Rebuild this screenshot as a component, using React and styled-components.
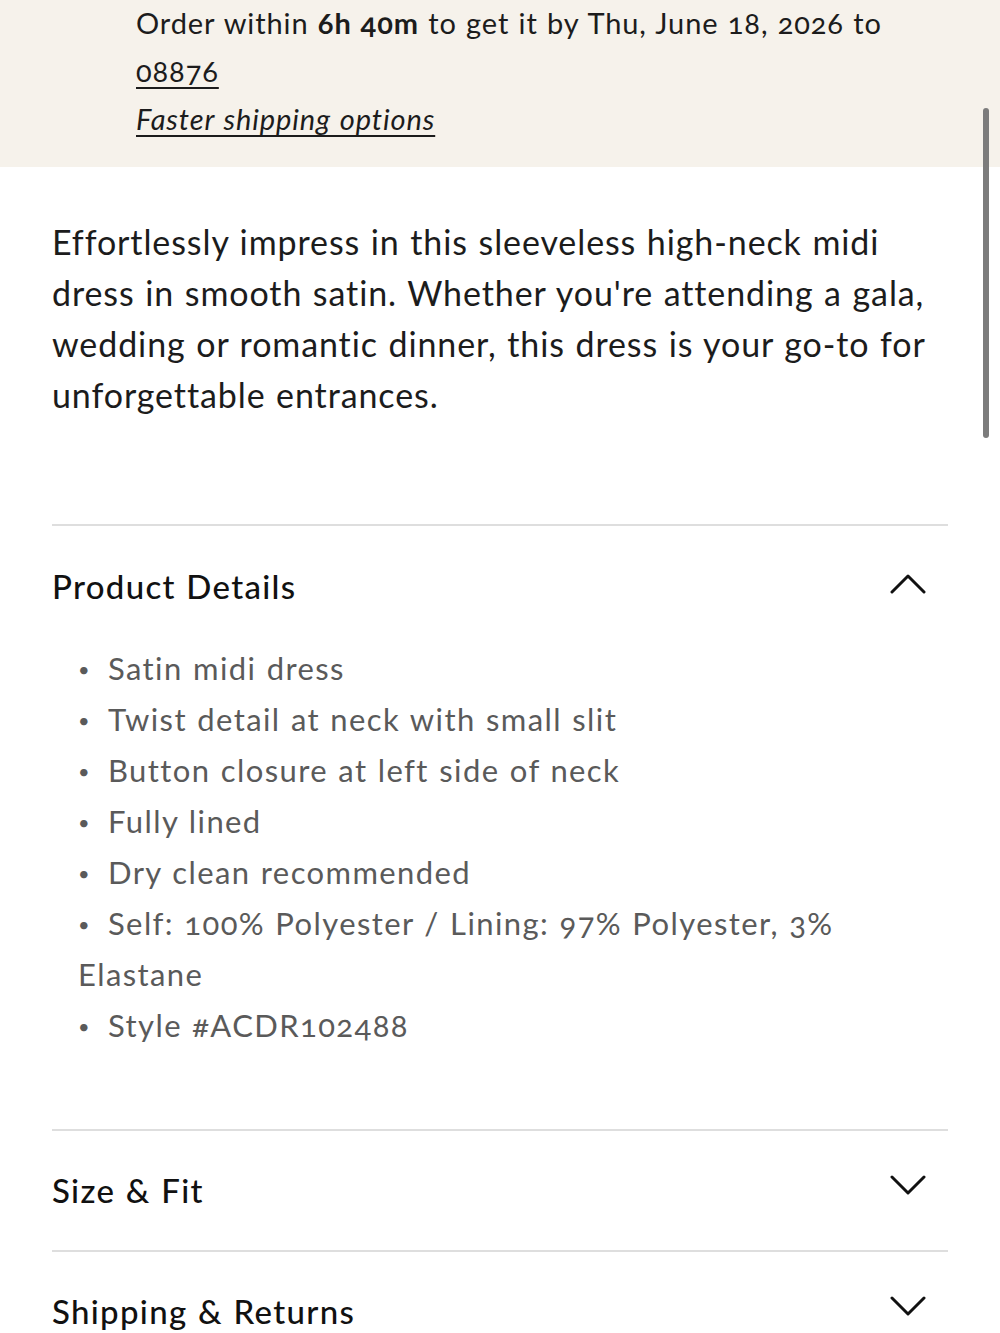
import React from "react";
import styled, { createGlobalStyle } from "styled-components";

const GlobalStyle = createGlobalStyle`
  html, body {
    margin: 0;
    padding: 0;
    background: #ffffff;
  }
  body {
    font-family: Lato, "Noto Sans", sans-serif;
    font-variant-numeric: oldstyle-nums;
    color: #1c1c1c;
    overflow: hidden;
  }
`;

const Page = styled.div`
  position: relative;
  width: 1000px;
  height: 1333px;
  overflow: hidden;
`;

const ScrollThumb = styled.div`
  position: absolute;
  top: 108px;
  right: 11px;
  width: 6px;
  height: 330px;
  border-radius: 3px;
  background: #7c7c7c;
`;

const DeliveryBanner = styled.div`
  background: #f6f2eb;
  padding: 0 80px 24px 136px;
  margin-top: -1px;
  font-size: 29px;
  line-height: 48px;
  letter-spacing: 0.9px;
  word-spacing: 1px;
  color: #1c1c1c;
`;

const Line = styled.div``;

const Strong = styled.b`
  font-weight: 700;
`;

const Link = styled.a`
  color: inherit;
  text-decoration: underline;
  text-underline-offset: 5px;
  text-decoration-thickness: 2px;
  font-style: ${(p) => (p.$italic ? "italic" : "normal")};
`;

const Content = styled.div`
  padding: 0 52px;
`;

const Description = styled.p`
  margin: 49px -8px 104px 0;
  font-size: 34px;
  line-height: 51px;
  letter-spacing: 0.9px;
  word-spacing: 1px;
  color: #1c1c1c;
`;

const Section = styled.div`
  border-top: 2px solid #dedede;
`;

const SectionHead = styled.div`
  display: flex;
  align-items: center;
  justify-content: space-between;
  padding: ${(p) => (p.$open ? "35px 22px 32px 0" : "34px 22px 35px 0")};
`;

const SectionTitle = styled.h3`
  margin: 0;
  font-size: 33px;
  line-height: 50px;
  font-weight: 500;
  letter-spacing: 1.3px;
  word-spacing: 1px;
  color: #111;
`;

const Chevron = styled.svg`
  width: 36px;
  height: 20px;
  margin-top: ${(p) => p.$shift || 0}px;
`;

const DetailList = styled.ul`
  list-style: none;
  margin: 0 0 78px;
  padding: 0 0 0 26px;
  font-size: 31px;
  line-height: 51px;
  letter-spacing: 1.4px;
  word-spacing: 1px;
  color: #5a5a5a;
`;

const DetailItem = styled.li`
  &::before {
    content: "•";
    display: inline-block;
    width: 30px;
    font-size: 20px;
    line-height: 20px;
    vertical-align: 3px;
  }
`;

const ChevronIcon = ({ up, shift }) => (
  <Chevron viewBox="0 0 36 20" $shift={shift}>
    <polyline
      points={up ? "2,18 18,2 34,18" : "2,2 18,18 34,2"}
      fill="none"
      stroke="#111"
      strokeWidth="3"
      strokeLinecap="round"
      strokeLinejoin="round"
    />
  </Chevron>
);

const details = [
  "Satin midi dress",
  "Twist detail at neck with small slit",
  "Button closure at left side of neck",
  "Fully lined",
  "Dry clean recommended",
  "Self: 100% Polyester / Lining: 97% Polyester, 3% Elastane",
  "Style #ACDR102488",
];

const App = () => {
  return (
    <Page>
      <GlobalStyle />
      <DeliveryBanner>
        <Line>
          Order within <Strong>6h 40m</Strong> to get it by Thu, June 18, 2026 to
        </Line>
        <Line>
          <Link href="#">08876</Link>
        </Line>
        <Line>
          <Link href="#" $italic>
            Faster shipping options
          </Link>
        </Line>
      </DeliveryBanner>
      <Content>
        <Description>
          Effortlessly impress in this sleeveless high-neck midi dress in smooth
          satin. Whether you're attending a gala, wedding or romantic dinner,
          this dress is your go-to for unforgettable entrances.
        </Description>
        <Section>
          <SectionHead $open>
            <SectionTitle>Product Details</SectionTitle>
            <ChevronIcon up shift={-4} />
          </SectionHead>
          <DetailList>
            {details.map((d) => (
              <DetailItem key={d}>{d}</DetailItem>
            ))}
          </DetailList>
        </Section>
        <Section>
          <SectionHead>
            <SectionTitle>Size &amp; Fit</SectionTitle>
            <ChevronIcon shift={-10} />
          </SectionHead>
        </Section>
        <Section>
          <SectionHead>
            <SectionTitle>Shipping &amp; Returns</SectionTitle>
            <ChevronIcon shift={-10} />
          </SectionHead>
        </Section>
      </Content>
      <ScrollThumb />
    </Page>
  );
};

export default App;
